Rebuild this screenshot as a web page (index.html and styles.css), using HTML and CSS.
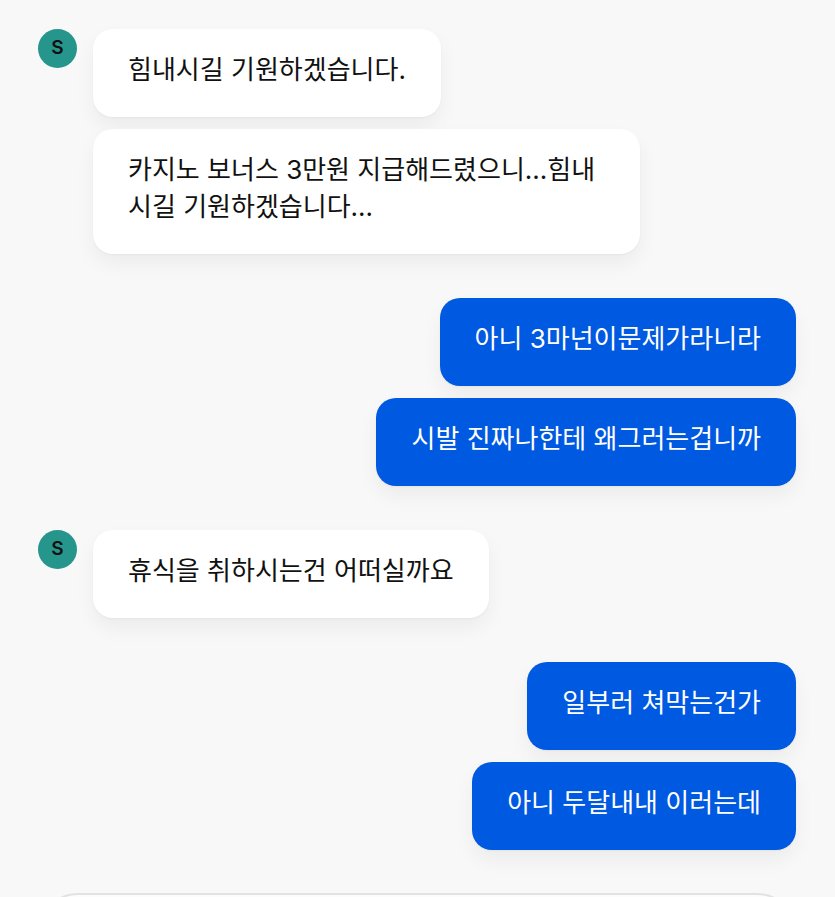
FILE: index.html
```html
<!DOCTYPE html>
<html lang="ko">
<head>
<meta charset="utf-8">
<meta name="viewport" content="width=device-width, initial-scale=1">
<title>Chat</title>
<link rel="stylesheet" href="styles.css">
</head>
<body>
<main class="chat">
  <section class="group">
    <div class="avatar">S</div>
    <div class="messages">
      <p class="bubble">힘내시길 기원하겠습니다.</p>
      <p class="bubble">카지노 보너스 3만원 지급해드렸으니...힘내시길 기원하겠습니다...</p>
    </div>
  </section>
  <section class="group own">
    <div class="messages">
      <p class="bubble">아니 3마넌이문제가라니라</p>
      <p class="bubble">시발 진짜나한테 왜그러는겁니까</p>
    </div>
  </section>
  <section class="group">
    <div class="avatar">S</div>
    <div class="messages">
      <p class="bubble">휴식을 취하시는건 어떠실까요</p>
    </div>
  </section>
  <section class="group own">
    <div class="messages">
      <p class="bubble">일부러 쳐막는건가</p>
      <p class="bubble">아니 두달내내 이러는데</p>
    </div>
  </section>
</main>
<form class="composer">
  <input class="field" type="text" aria-label="Message">
</form>
</body>
</html>
```
FILE: styles.css
```css
* {
  box-sizing: border-box;
}

body {
  display: flex;
  flex-direction: column;
  margin: 0;
  height: 100vh;
  overflow: hidden;
  background: #f8f8f8;
  color: #111;
  font-family: Inter, "Noto Sans CJK KR", sans-serif;
  font-size: 26px;
  line-height: 37px;
}

.chat {
  display: flex;
  flex: none;
  flex-direction: column;
  gap: 44px;
  padding: 29px 39px 43px 38px;
}

.group {
  display: flex;
  align-items: flex-start;
  gap: 16px;
}

.own {
  justify-content: flex-end;
}

.avatar {
  flex: none;
  width: 39px;
  height: 39px;
  border-radius: 50%;
  background: #26968c;
  font-size: 19px;
  font-weight: 600;
  line-height: 38px;
  text-align: center;
}

.messages {
  display: flex;
  flex-direction: column;
  align-items: flex-start;
  gap: 12px;
  max-width: 547px;
}

.own .messages {
  align-items: flex-end;
}

.bubble {
  margin: 0;
  padding: 22px 35px 29px;
  border-radius: 20px;
  background: #fff;
  box-shadow: 0 10px 20px rgba(0, 0, 0, 0.05), 0 1px 2px rgba(0, 0, 0, 0.04);
  word-break: break-all;
}

.own .bubble {
  background: #0059e1;
  color: #fff;
}

.composer {
  flex: 1;
  min-height: 0;
  overflow: hidden;
  padding: 0 38px;
}

.field {
  display: block;
  width: 100%;
  height: 88px;
  padding: 0 35px;
  border: 2px solid #e2e2e2;
  border-radius: 40px;
  background: #fcfcfc;
  font: inherit;
}
```
